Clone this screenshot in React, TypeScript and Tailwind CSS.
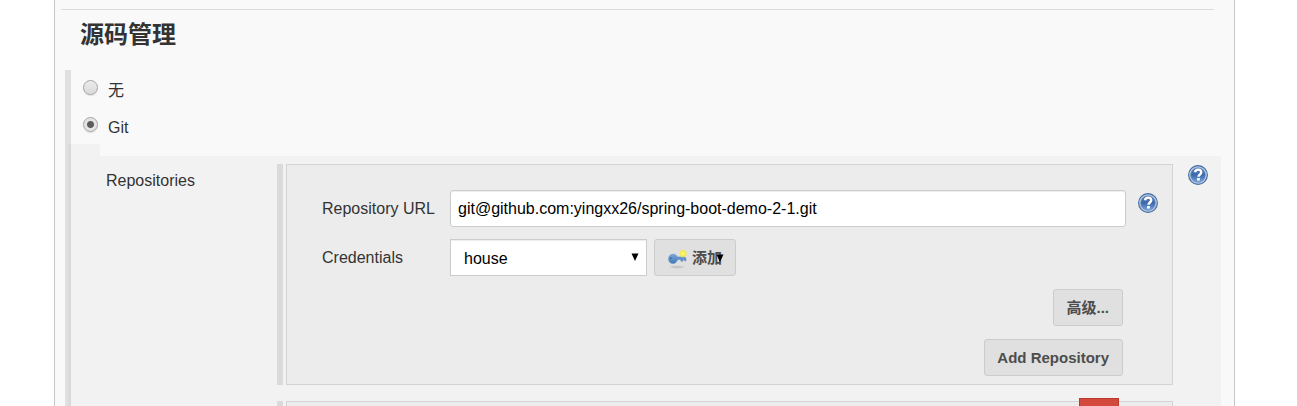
import { useState } from "react";
import type { ReactNode } from "react";

const buttonClass =
  "h-[37px] rounded-[3px] border border-[#ccc] bg-[#e0e0e0] pt-0.5 pr-[13px] pl-3 text-[15px] font-bold text-[#4d4d4d] whitespace-nowrap";

function HelpIcon() {
  return (
    <svg viewBox="0 0 20 20" className="block size-5" aria-hidden="true">
      <defs>
        <linearGradient id="help-fill" x1="0" y1="0" x2="0" y2="1">
          <stop offset="0" stopColor="#5c7db8" />
          <stop offset="0.5" stopColor="#3b68aa" />
          <stop offset="1" stopColor="#7ba4d8" />
        </linearGradient>
      </defs>
      <circle cx="10" cy="10" r="9.4" fill="#b9cde5" stroke="#416aa3" strokeWidth="1.1" />
      <circle cx="10" cy="10" r="7.3" fill="url(#help-fill)" stroke="#6486b8" strokeWidth="0.6" />
      <path d="M7 7.2C7.300 5.300 8.500 4.600 10.100 4.600c1.900 0 3.100 1 3.100 2.600 0 2.300-2.600 2.200-2.700 4.500" fill="none" stroke="#fff" strokeWidth="2.4" />
      <rect x="9.100" y="13" width="2.700" height="2.600" fill="#fff" />
    </svg>
  );
}

function HelpLink({ label }: { label: string }) {
  return (
    <a href="#help" aria-label={label} className="block size-5">
      <HelpIcon />
    </a>
  );
}

function KeyIcon() {
  return (
    <svg viewBox="0 0 20 20" className="block size-5 shrink-0" aria-hidden="true">
      <defs>
        <radialGradient id="key-glow">
          <stop offset="0" stopColor="#fffba0" />
          <stop offset="0.5" stopColor="#f7ec3c" />
          <stop offset="1" stopColor="#f7ec3c" stopOpacity="0" />
        </radialGradient>
        <linearGradient id="key-body" x1="0" y1="0" x2="0" y2="1">
          <stop offset="0" stopColor="#79a5d7" />
          <stop offset="1" stopColor="#4379b8" />
        </linearGradient>
      </defs>
      <ellipse cx="10" cy="18" rx="8" ry="1.5" fill="#aaa" opacity="0.25" />
      <ellipse cx="10" cy="18" rx="5" ry="1" fill="#aaa" opacity="0.35" />
      <path
        d="M6 5.2c2.300 0 3.600 1 4.300 2.700H18l1 1.500v2.400h-1.700v-1.200h-1.600v1.600h-1.800v-1.600h-3.400c-.6 2.500-2.200 4-4.500 4C3.300 14.600 1.500 12.500 1.500 9.900S3.300 5.200 6 5.200z"
        fill="url(#key-body)"
        stroke="#5a8ac4"
        strokeWidth="0.5"
      />
      <circle cx="4" cy="9.200" r="0.900" fill="#3f6ca6" />
      <circle cx="16" cy="4.600" r="4.500" fill="url(#key-glow)" />
    </svg>
  );
}

function Caret() {
  return (
    <svg viewBox="0 0 8 8" className="block size-2" aria-hidden="true">
      <path d="M0.500 0.500h7L4 8z" fill="#000" />
    </svg>
  );
}

function Radio({ label, checked, onSelect }: { label: string; checked: boolean; onSelect: () => void }) {
  return (
    <label className="flex h-[37px] items-start text-[#333]">
      <input
        type="radio"
        name="scm"
        checked={checked}
        onChange={onSelect}
        className="mt-[10px] size-[15px] shrink-0 appearance-none rounded-full border border-[#a6a6a6] bg-linear-to-b from-[#ececec] to-[#dadada] shadow-[0_1px_1px_#ddd] checked:bg-[radial-gradient(circle,#5c5c5c_3px,#e4e4e4_4px)]"
      />
      <span className="ml-[10px] pt-[9px] leading-6">{label}</span>
    </label>
  );
}

function GroupBox({ children }: { children: ReactNode }) {
  return (
    <div className="flex gap-[3px]">
      <div className="w-[6px] shrink-0 bg-[#dadada]" />
      <div className="relative min-w-0 grow border border-[#d3d3d3] bg-[#ececec]">{children}</div>
    </div>
  );
}

export default function App() {
  const [scm, setScm] = useState("git");
  const [url, setUrl] = useState("git@github.com:yingxx26/spring-boot-demo-2-1.git");

  return (
    <div className="h-screen overflow-hidden bg-white pr-[62px] pl-[54px] font-['Liberation_Sans','Noto_Sans_CJK_SC',sans-serif] text-base text-[#333]">
      <main className="flex h-full flex-col border-x border-[#c8c8c8] bg-[#f9f9f9] pt-[9px] pr-[13px] pl-[10px]">
        <hr className="-ml-1 mr-[7px] border-[#dcdcdc]" />
        <h2 className="h-[60px] shrink-0 pt-[9px] pl-[15px] text-2xl leading-8 font-bold">源码管理</h2>

        <div className="shrink-0 border-l-[6px] border-[#e0e0e0] pl-3">
          <Radio label="无" checked={scm === "none"} onSelect={() => setScm("none")} />
          <Radio label="Git" checked={scm === "git"} onSelect={() => setScm("git")} />
        </div>

        <div className="grow border-l-[3px] border-[#e0e0e0]">
          <div className="flex h-full flex-col border-l-[3px] border-[#d9d9d9]">
            <div className="h-3 w-[29px] shrink-0 bg-[#f2f2f2]" />
            <div className="flex grow bg-[#f2f2f2] pt-2">
              <div className="w-[206px] shrink-0 pt-[5px] pl-[35px] leading-6">Repositories</div>

              <div className="flex min-w-0 grow flex-col gap-4">
                <GroupBox>
                  <div className="flex flex-col pt-[25px] pb-2 pl-[35px]">
                    <div className="flex items-center">
                      <label htmlFor="repo-url" className="w-32 shrink-0">Repository URL</label>
                      <input
                        id="repo-url"
                        value={url}
                        onChange={(e) => setUrl(e.target.value)}
                        className="h-[37px] min-w-0 grow rounded-[3px] border border-[#ccc] bg-white px-[7px] text-black shadow-[inset_0_1px_1px_#eee]"
                      />
                      <div className="w-[46px] shrink-0 pb-[11px] pl-3">
                        <HelpLink label="Repository URL" />
                      </div>
                    </div>

                    <div className="mt-3 flex items-center">
                      <label htmlFor="credentials" className="w-32 shrink-0">Credentials</label>
                      <div className="relative">
                        <select
                          id="credentials"
                          className="block h-[37px] w-[197px] appearance-none border border-[#ccc] bg-white px-[13px] pt-0.5 text-black shadow-[inset_0_1px_1px_#eee]"
                        >
                          <option>house</option>
                        </select>
                        <span className="pointer-events-none absolute top-[14px] right-2">
                          <Caret />
                        </span>
                      </div>
                      <button type="button" className={`${buttonClass} relative ml-[7px] flex items-center gap-[5px]`}>
                        <KeyIcon />
                        添加
                        <span className="absolute top-[14px] right-[11px]">
                          <Caret />
                        </span>
                      </button>
                    </div>

                    <div className="mt-[13px] mr-[49px] flex flex-col items-end gap-[13px]">
                      <button type="button" className={buttonClass}>高级...</button>
                      <button type="button" className={buttonClass}>Add Repository</button>
                    </div>
                  </div>
                </GroupBox>

                <GroupBox>
                  <div className="h-20" />
                  <button
                    type="button"
                    aria-label="X"
                    className="absolute -top-1 right-[53px] h-[37px] w-10 border border-[#b93a2c] bg-[#d3493b]"
                  />
                </GroupBox>
              </div>

              <div className="w-12 shrink-0 pt-px pl-[15px]">
                <HelpLink label="Repositories" />
              </div>
            </div>
          </div>
        </div>
      </main>
    </div>
  );
}
